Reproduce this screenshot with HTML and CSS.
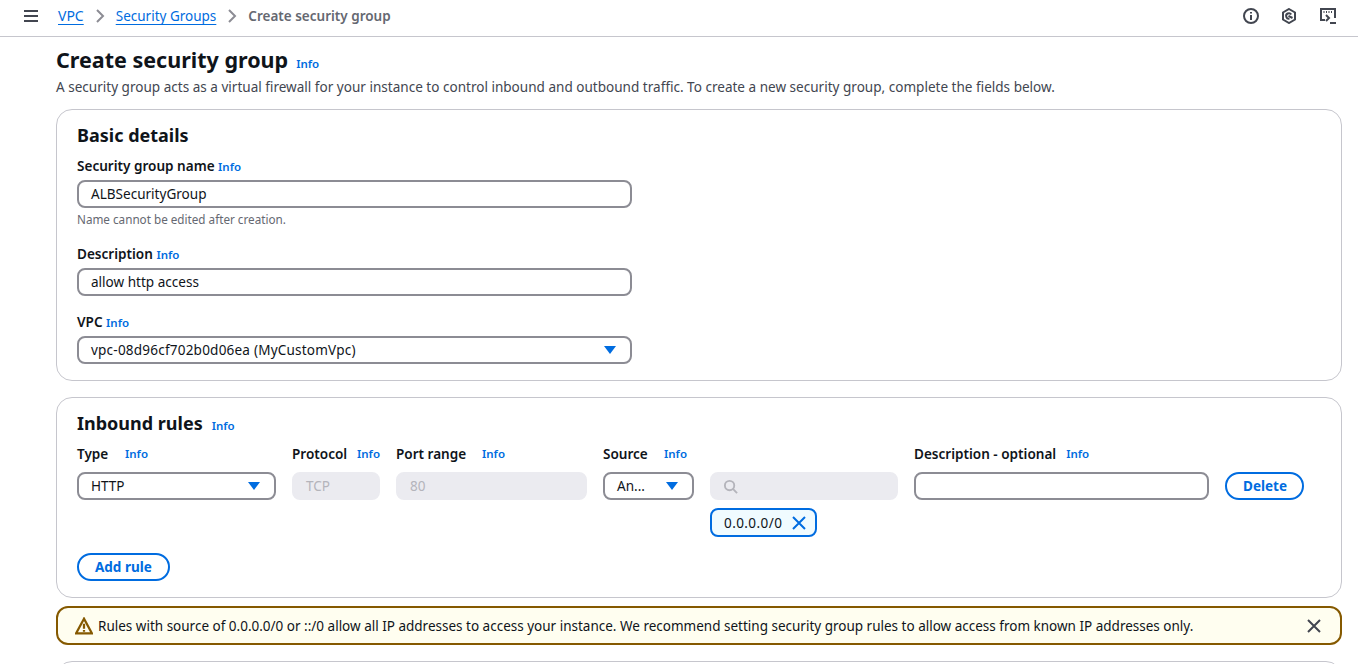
FILE: index.html
```html
<!DOCTYPE html>
<html lang="en">
<head>
    <meta charset="UTF-8">
    <meta name="viewport" content="width=device-width, initial-scale=1.0">
    <title>Create security group</title>
    <link rel="stylesheet" href="styles.css">
</head>
<body>
    <header class="topbar">
        <svg class="menu-icon" width="16" height="16" viewBox="0 0 16 16"><path d="M1 3h14M1 8h14M1 13h14"/></svg>
        <nav class="crumbs">
            <a class="crumb-vpc" href="#">VPC</a>
            <svg class="crumb-sep" width="16" height="16" viewBox="0 0 16 16"><path d="M5 2l6 6-6 6"/></svg>
            <a href="#">Security Groups</a>
            <svg class="crumb-sep" width="16" height="16" viewBox="0 0 16 16"><path d="M5 2l6 6-6 6"/></svg>
            <span class="crumb-current">Create security group</span>
        </nav>
        <div class="top-icons">
            <svg width="16" height="16" viewBox="0 0 16 16"><circle cx="8" cy="8" r="7"/><path d="M8 7v5M8 4v1.600"/></svg>
            <svg width="16" height="16" viewBox="0 0 16 16"><path d="M8 1l6 3.500v7L8 15l-6-3.500v-7z"/><path d="M10.200 6.600A2.700 2.700 0 1 0 8.500 10.600M7.500 7.800l4 2.200"/></svg>
            <svg width="18" height="18" viewBox="0 0 18 18"><path d="M6 13H2V2h14v9"/><path d="M4.500 5h1M7 5h1M9.500 5h1M12 5h1"/><path d="M7 8l3 3-3 3"/><path d="M11 16h6"/></svg>
        </div>
    </header>

    <main class="page">
        <div class="page-title">
            <h1>Create security group</h1>
            <a class="info" href="#">Info</a>
        </div>
        <p class="page-desc">A security group acts as a virtual firewall for your instance to control inbound and outbound traffic. To create a new security group, complete the fields below.</p>

        <section class="card card-basic">
            <h2>Basic details</h2>
            <div class="field">
                <div class="label">Security group name <a class="info" href="#">Info</a></div>
                <div class="input">ALBSecurityGroup</div>
                <div class="hint">Name cannot be edited after creation.</div>
            </div>
            <div class="field">
                <div class="label">Description <a class="info" href="#">Info</a></div>
                <div class="input">allow http access</div>
            </div>
            <div class="field">
                <div class="label">VPC <a class="info" href="#">Info</a></div>
                <div class="input select vpc-value">vpc-08d96cf702b0d06ea (MyCustomVpc)<span class="caret"></span></div>
            </div>
        </section>

        <section class="card card-rules">
            <div class="rules-title">
                <h2>Inbound rules</h2>
                <a class="info" href="#">Info</a>
            </div>
            <div class="rule-grid">
                <div class="label col-head head-type">Type <a class="info" href="#">Info</a></div>
                <div class="label col-head">Protocol <a class="info" href="#">Info</a></div>
                <div class="label col-head head-port">Port range <a class="info" href="#">Info</a></div>
                <div class="label col-head head-source">Source <a class="info" href="#">Info</a></div>
                <div></div>
                <div class="label col-head head-desc">Description - optional <a class="info" href="#">Info</a></div>
                <div></div>

                <div class="input select">HTTP<span class="caret"></span></div>
                <div class="input disabled">TCP</div>
                <div class="input disabled">80</div>
                <div class="input select">An...<span class="caret"></span></div>
                <div class="source-col">
                    <div class="input disabled search">
                        <svg width="15" height="15" viewBox="0 0 16 16"><circle cx="7" cy="7" r="5"/><path d="M10.600 10.600L15 15"/></svg>
                    </div>
                    <div class="token">0.0.0.0/0
                        <svg width="16" height="16" viewBox="0 0 16 16"><path d="M2 2l12 12M14 2L2 14"/></svg>
                    </div>
                </div>
                <div class="input"></div>
                <button class="btn" type="button">Delete</button>
            </div>
            <button class="btn add-rule" type="button">Add rule</button>
        </section>

        <div class="alert">
            <svg class="alert-icon" width="18" height="18" viewBox="0 0 16 16"><path d="M8 1.500L1 14.500h14z"/><path d="M8 6v4.500M8 11.600v1.500"/></svg>
            <span class="alert-text">Rules with source of 0.0.0.0/0 or ::/0 allow all IP addresses to access your instance. We recommend setting security group rules to allow access from known IP addresses only.</span>
            <svg class="alert-close" width="16" height="16" viewBox="0 0 16 16"><path d="M2 2l12 12M14 2L2 14"/></svg>
        </div>

        <section class="card card-next"></section>
    </main>
</body>
</html>
```

FILE: styles.css
```css
html, body {
    height: 100%;
}
body {
    display: flex;
    flex-direction: column;
    margin: 0;
    overflow: hidden;
    background-color: #fff;
    color: #0f141a;
    font-family: "Noto Sans", "Open Sans", sans-serif;
    font-size: 13.550px;
    line-height: 20px;
}
svg {
    fill: none;
    stroke: currentColor;
    stroke-width: 2;
    flex: none;
}
a {
    color: #006ce0;
}

/* top bar */
.topbar {
    display: flex;
    flex: none;
    align-items: center;
    box-sizing: border-box;
    height: 37px;
    padding: 0 21px 4px 23px;
    border-bottom: 1px solid #c6c6cd;
}
.menu-icon {
    color: #424650;
    margin-right: 19px;
}
.crumbs {
    display: flex;
    align-items: center;
    gap: 8px;
    font-size: 13.500px;
}
.crumbs a {
    text-underline-offset: 3px;
}
.crumb-vpc {
    font-size: 14px;
}
.crumb-sep {
    color: #8c8c94;
}
.crumb-current {
    color: #656871;
    font-weight: 600;
}
.top-icons {
    display: flex;
    align-items: center;
    gap: 22px;
    margin-left: auto;
    color: #424650;
}

/* page */
.page {
    flex: 1;
    min-height: 0;
    overflow: hidden;
    padding: 0 16px 0 56px;
}
.page-title {
    display: flex;
    align-items: baseline;
    gap: 8px;
    padding-top: 8px;
}
h1 {
    margin: 0;
    font-size: 21.500px;
    line-height: 30px;
    font-weight: 700;
}
h2 {
    margin: 0;
    font-size: 18px;
    line-height: 24px;
    font-weight: 700;
}
.info {
    font-size: 11.500px;
    font-weight: 600;
    text-decoration: none;
}
.page-desc {
    margin: 2px 0 12px;
    color: #424650;
}

/* cards */
.card {
    border: 1px solid #c6c6cd;
    border-radius: 16px;
    background: #fff;
    padding: 0 20px;
}
.card-basic {
    height: 272px;
    box-sizing: border-box;
    padding-top: 13px;
    margin-bottom: 16px;
}
.card-rules {
    height: 201px;
    box-sizing: border-box;
    padding-top: 13px;
    margin-bottom: 8px;
}
.card-next {
    height: 40px;
    margin-top: 16px;
}
.field {
    width: 555px;
    margin-bottom: 16px;
}
.card-basic h2 {
    margin-bottom: 9px;
}
.label {
    font-weight: 600;
    margin-bottom: 3px;
}
.input {
    position: relative;
    box-sizing: border-box;
    height: 28px;
    padding: 0 12px;
    border: 2px solid #8c8c94;
    border-radius: 8px;
    line-height: 24px;
    white-space: nowrap;
}
.hint {
    font-size: 11.700px;
    line-height: 16px;
    margin-top: 3px;
    padding-bottom: 1px;
    color: #656871;
}
.select {
    display: flex;
    align-items: center;
    justify-content: space-between;
}
.vpc-value {
    letter-spacing: 0.200px;
}
.caret {
    width: 0;
    height: 0;
    border-left: 6px solid transparent;
    border-right: 6px solid transparent;
    border-top: 8px solid #006ce0;
}
.input.select {
    padding-right: 14px;
}

/* inbound rules */
.rules-title {
    display: flex;
    align-items: baseline;
    gap: 9px;
    margin-bottom: 8px;
}
.rule-grid {
    display: grid;
    grid-template-columns: 199px 88px 191px 91px 188px 295px 79px;
    column-gap: 16px;
    row-gap: 8px;
    align-items: start;
}
.col-head {
    display: flex;
    justify-content: space-between;
    margin-bottom: 0;
}
.head-type .info {
    margin-right: 128px;
}
.head-port .info {
    margin-right: 82px;
}
.head-source .info {
    margin-right: 7px;
}
.head-desc {
    justify-content: flex-start;
    gap: 10px;
}
.disabled {
    border-color: #ebebf0;
    background: #ebebf0;
    color: #b4b4bb;
}
.search {
    display: flex;
    align-items: center;
    padding-left: 11px;
    color: #b4b4bb;
}
.token {
    display: inline-flex;
    align-items: center;
    gap: 9px;
    box-sizing: border-box;
    height: 29px;
    margin-top: 8px;
    padding: 0 8px 0 12px;
    border: 2px solid #006ce0;
    border-radius: 8px;
    background: #f0fbff;
    letter-spacing: 0.400px;
}
.token svg {
    color: #006ce0;
}
.btn {
    box-sizing: border-box;
    height: 28px;
    padding: 0 16px;
    border: 2px solid #006ce0;
    border-radius: 20px;
    background: #fff;
    color: #006ce0;
    font-family: inherit;
    font-size: 13.500px;
    font-weight: 700;
    white-space: nowrap;
}
.add-rule {
    display: block;
    margin-top: 16px;
}

/* warning */
.alert {
    display: flex;
    align-items: center;
    box-sizing: border-box;
    height: 39px;
    padding: 0 18px 0 17px;
    border: 2px solid #855900;
    border-radius: 12px;
    background: #fffef0;
    font-size: 13.500px;
}
.alert-icon {
    color: #855900;
    margin-right: 5px;
}
.alert-text {
    flex: 1;
}
.alert-close {
    color: #424650;
}
```
